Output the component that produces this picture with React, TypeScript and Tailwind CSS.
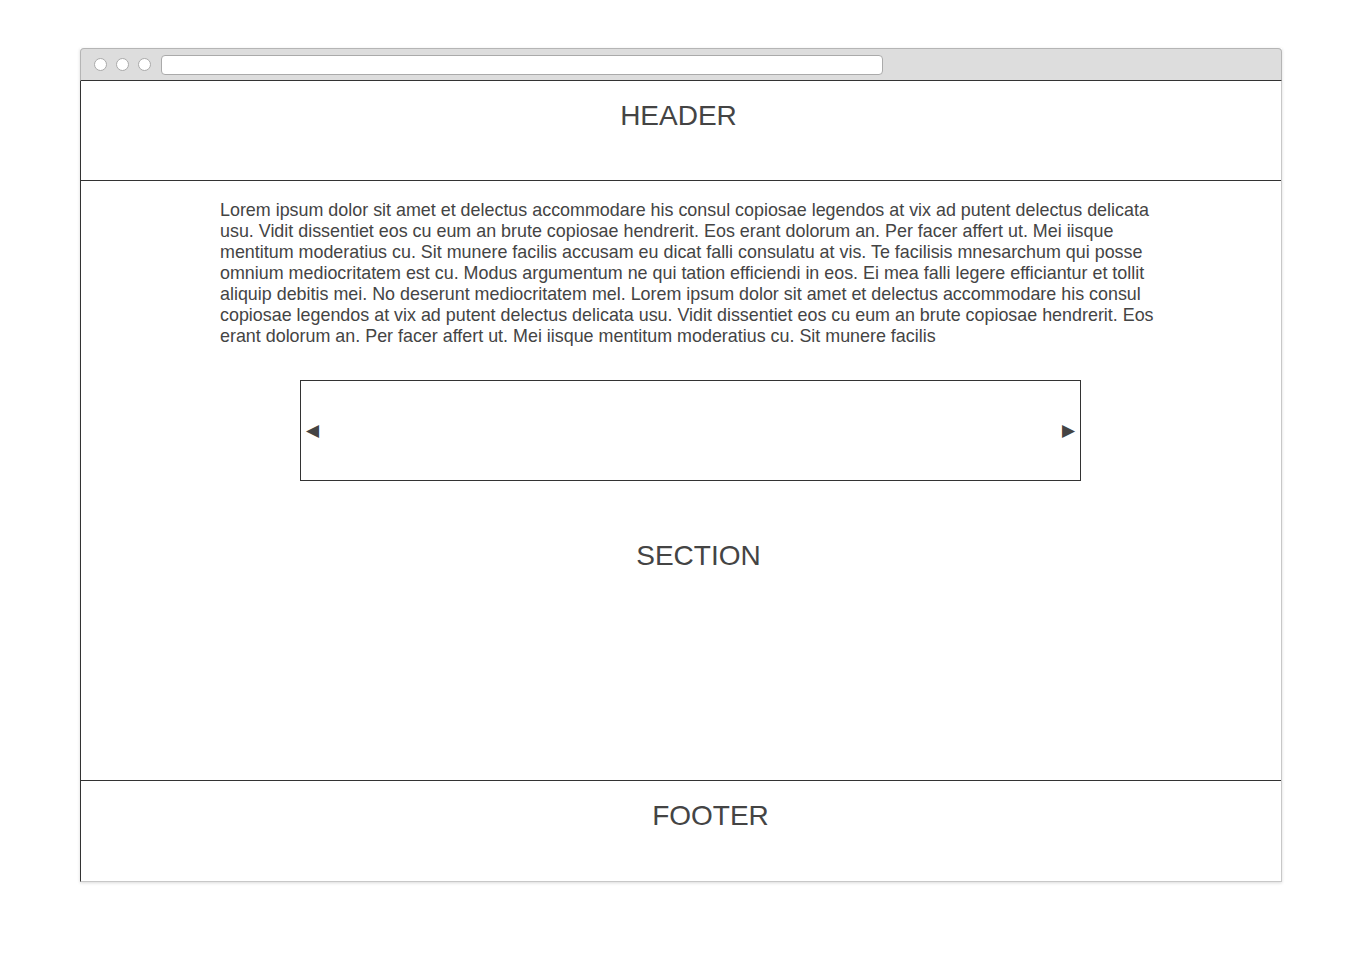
export default function App() {
  const text =
    "Lorem ipsum dolor sit amet et delectus accommodare his consul copiosae legendos at vix ad putent delectus delicata usu. Vidit dissentiet eos cu eum an brute copiosae hendrerit. Eos erant dolorum an. Per facer affert ut. Mei iisque mentitum moderatius cu. Sit munere facilis accusam eu dicat falli consulatu at vis. Te facilisis mnesarchum qui posse omnium mediocritatem est cu. Modus argumentum ne qui tation efficiendi in eos. Ei mea falli legere efficiantur et tollit aliquip debitis mei. No deserunt mediocritatem mel. Lorem ipsum dolor sit amet et delectus accommodare his consul copiosae legendos at vix ad putent delectus delicata usu. Vidit dissentiet eos cu eum an brute copiosae hendrerit. Eos erant dolorum an. Per facer affert ut. Mei iisque mentitum moderatius cu. Sit munere facilis";

  return (
    <div className="min-h-[960px] bg-white pt-[48px] pl-[80px] font-['Liberation_Sans',Arial,sans-serif] text-[#444]">
      <div className="w-[1202px] shadow-[0_1px_3px_rgba(0,0,0,0.15)]">
        {/* browser chrome */}
        <div className="flex h-[33px] items-center gap-[10px] rounded-t-[4px] border border-b-[#333] border-[#b5b5b5] bg-[#dddddd] pl-[13px]">
          <div className="flex gap-[9px]">
            <span className="h-[13px] w-[13px] rounded-full border border-[#aaa] bg-white" />
            <span className="h-[13px] w-[13px] rounded-full border border-[#aaa] bg-white" />
            <span className="h-[13px] w-[13px] rounded-full border border-[#aaa] bg-white" />
          </div>
          <div className="h-[20px] w-[722px] rounded-[4px] border border-[#aaa] bg-white" />
        </div>

        <div className="border-l border-r border-b border-l-[#333] border-r-[#c8c8c8] border-b-[#c8c8c8]">
          {/* header */}
          <div className="h-[100px] border-b border-[#333] pt-[19px] pr-[5px] text-center text-[28px] leading-[32px]">
            HEADER
          </div>

          {/* section */}
          <div className="h-[600px] border-b border-[#333] pt-[19px]">
            <p className="ml-[139px] w-[942px] text-[17.9px] leading-[21px]">{text}</p>
            <div className="ml-[219px] mt-[33px] flex h-[101px] w-[781px] items-center justify-between border border-[#333] px-[5px] text-[17px] text-[#444]">
              <span>◀</span>
              <span>▶</span>
            </div>
            <div className="mt-[59px] pl-[35px] text-center text-[28px] leading-[32px]">SECTION</div>
          </div>

          {/* footer */}
          <div className="h-[100px] pt-[19px] pl-[59px] text-center text-[28px] leading-[32px]">FOOTER</div>
        </div>
      </div>
    </div>
  );
}
